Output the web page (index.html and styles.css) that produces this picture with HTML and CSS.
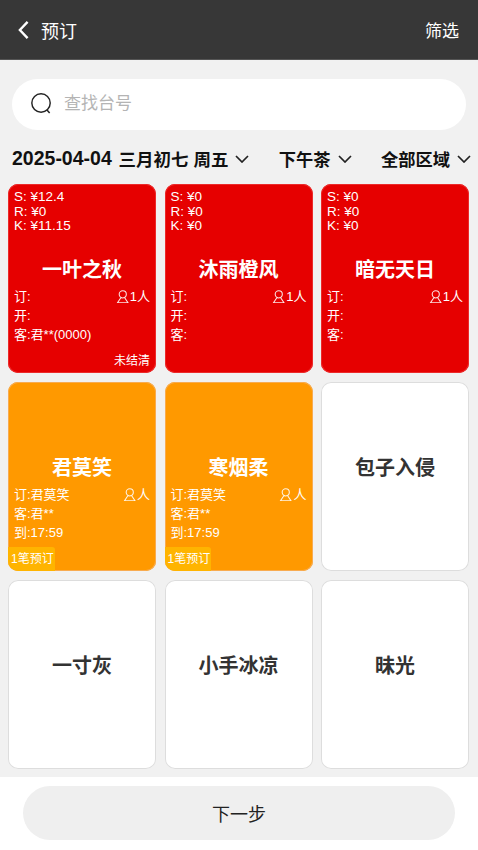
FILE: index.html
```html
<!DOCTYPE html>
<html lang="zh">
<head>
<meta charset="utf-8">
<title>预订</title>
<link rel="stylesheet" href="styles.css">
</head>
<body>
<div class="page">
  <header class="topbar">
    <div class="topbar-left">
      <svg class="back" viewBox="0 0 14 22"><path d="M11.5 2 L3 11 L11.5 20"/></svg>
      <span class="topbar-title">预订</span>
    </div>
    <span class="topbar-action">筛选</span>
  </header>
  <main class="content">
    <div class="search">
      <svg class="search-icon" viewBox="0 0 24 24"><circle cx="11.5" cy="11.5" r="9.6"/><path d="M17.5 18.5 L20.5 22"/></svg>
      <span class="search-text">查找台号</span>
    </div>
    <div class="filters">
      <span class="filter filter-long"><span class="filter-date">2025-04-04</span> 三月初七 周五<svg class="chev" viewBox="0 0 14 8"><path d="M1 1 L7 7 L13 1"/></svg></span>
      <span class="filter">下午茶<svg class="chev" viewBox="0 0 14 8"><path d="M1 1 L7 7 L13 1"/></svg></span>
      <span class="filter">全部区域<svg class="chev" viewBox="0 0 14 8"><path d="M1 1 L7 7 L13 1"/></svg></span>
    </div>
    <div class="grid">
      <article class="card red">
        <div class="stats"><div>S: ¥12.4</div><div>R: ¥0</div><div>K: ¥11.15</div></div>
        <h2 class="name">一叶之秋</h2>
        <div class="info">
          <div class="row"><span>订:</span><span class="people"><svg class="person" viewBox="0 0 14 14"><circle cx="7" cy="4.5" r="3.7"/><path d="M5 8 L1.5 13.3 H12.5 L9 8"/></svg>1人</span></div>
          <div>开:</div>
          <div>客:君**(0000)</div>
        </div>
        <span class="status">未结清</span>
      </article>
      <article class="card red">
        <div class="stats"><div>S: ¥0</div><div>R: ¥0</div><div>K: ¥0</div></div>
        <h2 class="name">沐雨橙风</h2>
        <div class="info">
          <div class="row"><span>订:</span><span class="people"><svg class="person" viewBox="0 0 14 14"><circle cx="7" cy="4.5" r="3.7"/><path d="M5 8 L1.5 13.3 H12.5 L9 8"/></svg>1人</span></div>
          <div>开:</div>
          <div>客:</div>
        </div>
      </article>
      <article class="card red">
        <div class="stats"><div>S: ¥0</div><div>R: ¥0</div><div>K: ¥0</div></div>
        <h2 class="name">暗无天日</h2>
        <div class="info">
          <div class="row"><span>订:</span><span class="people"><svg class="person" viewBox="0 0 14 14"><circle cx="7" cy="4.5" r="3.7"/><path d="M5 8 L1.5 13.3 H12.5 L9 8"/></svg>1人</span></div>
          <div>开:</div>
          <div>客:</div>
        </div>
      </article>
      <article class="card orange">
        <div class="stats"></div>
        <h2 class="name">君莫笑</h2>
        <div class="info">
          <div class="row"><span>订:君莫笑</span><span class="people"><svg class="person" viewBox="0 0 14 14"><circle cx="7" cy="4.5" r="3.7"/><path d="M5 8 L1.5 13.3 H12.5 L9 8"/></svg>人</span></div>
          <div>客:君**</div>
          <div>到:17:59</div>
        </div>
        <span class="badge">1笔预订</span>
      </article>
      <article class="card orange">
        <div class="stats"></div>
        <h2 class="name">寒烟柔</h2>
        <div class="info">
          <div class="row"><span>订:君莫笑</span><span class="people"><svg class="person" viewBox="0 0 14 14"><circle cx="7" cy="4.5" r="3.7"/><path d="M5 8 L1.5 13.3 H12.5 L9 8"/></svg>人</span></div>
          <div>客:君**</div>
          <div>到:17:59</div>
        </div>
        <span class="badge">1笔预订</span>
      </article>
      <article class="card free"><div class="stats"></div><h2 class="name">包子入侵</h2></article>
      <article class="card free"><div class="stats"></div><h2 class="name">一寸灰</h2></article>
      <article class="card free"><div class="stats"></div><h2 class="name">小手冰凉</h2></article>
      <article class="card free"><div class="stats"></div><h2 class="name">昧光</h2></article>
    </div>
  </main>
  <footer class="footer">
    <button class="next">下一步</button>
  </footer>
</div>
</body>
</html>
```
FILE: styles.css
```css
* { box-sizing: border-box; }
html, body { margin: 0; padding: 0; }
body {
  font-family: "Liberation Sans", "Noto Sans CJK SC", sans-serif;
  background: #fff;
}
.page {
  width: 478px;
  height: 850px;
  display: flex;
  flex-direction: column;
  overflow: hidden;
}
.topbar {
  height: 60px;
  flex: none;
  background: #373737;
  color: #fff;
  display: flex;
  align-items: center;
  justify-content: space-between;
  padding: 0 19px 0 17px;
  border-bottom: 1px solid #555;
}
.topbar-left { display: flex; align-items: center; gap: 11px; }
.back { width: 13px; height: 20px; fill: none; stroke: #fff; stroke-width: 2.6; }
.topbar-title { font-size: 18px; }
.topbar-action { font-size: 17px; }
.content {
  flex: 1;
  height: 717px;
  background: #f1f1f1;
  overflow: hidden;
  padding-top: 19px;
}
.search {
  height: 51px;
  margin: 0 12px;
  background: #fff;
  border-radius: 26px;
  display: flex;
  align-items: center;
  padding-left: 18px;
  gap: 11px;
}
.search-icon { width: 23px; height: 23px; fill: none; stroke: #222; stroke-width: 1.5; margin-bottom: 2px; }
.search-text { font-size: 17px; color: #b4b4b4; margin-bottom: 6px; }
.filters {
  height: 54px;
  margin-left: 12px;
  margin-right: 7px;
  padding-top: 3px;
  display: flex;
  align-items: center;
  justify-content: space-between;
}
.filter {
  font-size: 17.25px;
  font-weight: 700;
  color: #111;
  display: flex;
  align-items: center;
  white-space: pre;
}
.filter-long { font-size: 17.5px; }
.filter-date { font-size: 19.5px; margin-right: 2px; }
.chev { width: 14px; height: 8px; fill: none; stroke: #222; stroke-width: 1.7; margin-left: 7px; }
.grid {
  display: grid;
  grid-template-columns: repeat(3, 148px);
  grid-auto-rows: 189px;
  gap: 9px 8.5px;
  padding: 0 8px;
}
.card {
  position: relative;
  border-radius: 10px;
  padding: 6px;
  font-size: 13px;
  overflow: hidden;
}
.red { background: #e60000; color: #fff; box-shadow: inset 0 0 0 1px #ec2a2a; }
.orange { background: #ff9900; color: #fff; box-shadow: inset 0 0 0 1px #f8ab50; }
.free { background: #fff; color: #333; box-shadow: inset 0 0 0 1px #ddd; }
.stats { height: 59px; line-height: 14.5px; font-size: 13.5px; }
.name {
  margin: 7px 0 3px;
  height: 28px;
  line-height: 28px;
  font-size: 20px;
  font-weight: 700;
  text-align: center;
}
.info { line-height: 19px; }
.row { display: flex; justify-content: space-between; align-items: center; }
.people { display: flex; align-items: center; font-size: 13px; }
.person { width: 13.5px; height: 13.5px; fill: none; stroke: currentColor; stroke-width: 1.1; margin-right: .5px; opacity: .9; }
.status {
  position: absolute;
  right: 6px;
  bottom: 4px;
  font-size: 12px;
  line-height: 16px;
}
.badge {
  position: absolute;
  left: 0;
  bottom: 0;
  padding: 0 1.3px 0 3px;
  height: 24px;
  line-height: 24px;
  font-size: 12px;
  background: #ffb400;
  border-top-right-radius: 3px;
}
.footer {
  height: 73px;
  flex: none;
  background: #fff;
  padding: 9px 23px 10px;
}
.next {
  display: block;
  width: 432px;
  height: 54px;
  border: 0;
  border-radius: 27px;
  background: #efefef;
  font-family: inherit;
  font-size: 18px;
  color: #222;
}
```
